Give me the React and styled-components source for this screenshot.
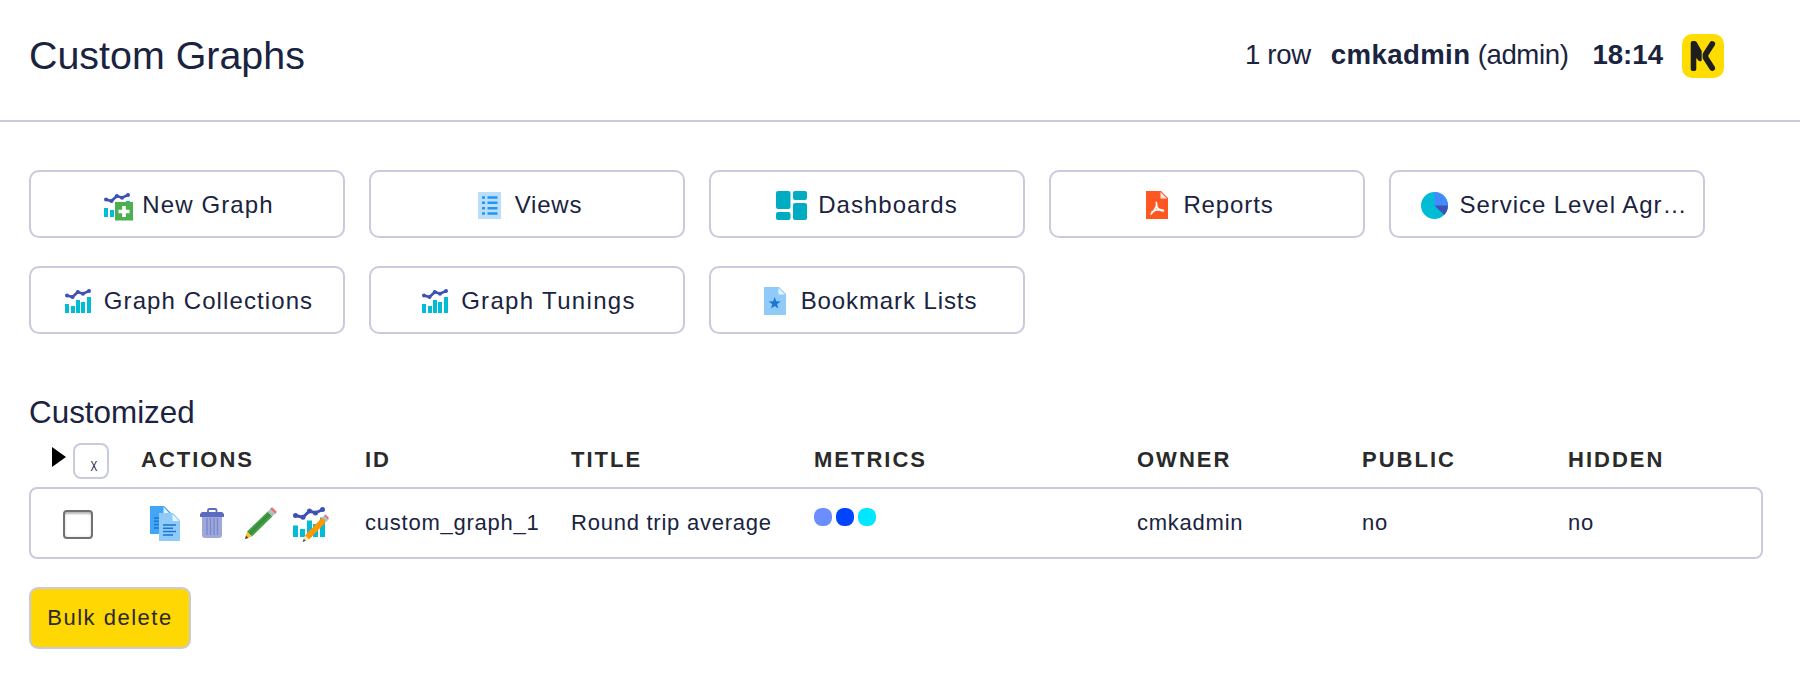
import React from "react";
import styled, { createGlobalStyle } from "styled-components";

const line = "#c9cbdc";
const ink = "#1a2340";

const GlobalStyle = createGlobalStyle`
  * { box-sizing: border-box; }
  body {
    margin: 0;
    background: #fff;
    color: ${ink};
    font-family: "Liberation Sans", Arial, sans-serif;
  }
  svg { display: block; flex: none; }
`;

const Page = styled.div`
  height: 677px;
  overflow: hidden;
`;

const Header = styled.header`
  height: 122px;
  border-bottom: 2px solid ${line};
  padding: 0 76px 8px 29px;
  display: flex;
  align-items: center;
  justify-content: space-between;
`;

const PageTitle = styled.h1`
  margin: 0;
  padding-bottom: 2px;
  font-size: 39.4px;
  font-weight: 400;
  line-height: 44px;
`;

const Status = styled.div`
  display: flex;
  align-items: center;
  font-size: 27.6px;
  line-height: 32px;
  white-space: pre;
`;

const RowCount = styled.span`
  padding-bottom: 2px;
  letter-spacing: -0.35px;
`;

const User = styled.span`
  margin: 0 24px 0 20px;
  padding-bottom: 2px;
  letter-spacing: -0.4px;

  strong {
    letter-spacing: 0.4px;
  }
`;

const Clock = styled.strong`
  margin-right: 19px;
  padding-bottom: 2px;
`;

const Nav = styled.nav`
  display: grid;
  grid-template-columns: repeat(5, 316px);
  gap: 28px 24px;
  padding: 48px 0 0 29px;
`;

const NavButton = styled.a`
  height: 68px;
  border: 2px solid ${line};
  border-radius: 10px;
  display: flex;
  align-items: center;
  justify-content: center;
`;

const NavLabel = styled.span`
  padding-top: 2px;
  font-size: 24px;
  letter-spacing: ${(p) => p.$tracking}px;
  line-height: 28px;
  white-space: nowrap;
  overflow: hidden;
  text-overflow: ellipsis;
  max-width: 232px;
`;

const IconSlot = styled.span`
  flex: none;
  padding: ${(p) => p.$drop || 2}px ${(p) => p.$after}px 0 ${(p) => p.$before}px;
`;

const SectionTitle = styled.h2`
  margin: 61px 0 0 29px;
  font-size: 31.4px;
  font-weight: 400;
  line-height: 36px;
`;

const HeadRow = styled.div`
  margin: 12px 37px 8px 29px;
  height: 36px;
  display: grid;
  grid-template-columns: 112px 224px 206px 243px 323px 225px 206px 1fr;
  align-items: center;
  color: #2a2a2a;
  font-size: 22px;
  font-weight: 700;
  letter-spacing: 2px;
  line-height: 26px;
`;

const HeadLabel = styled.span`
  padding-bottom: 2px;
`;

const HeadTools = styled.div`
  display: flex;
  align-items: center;
  padding-left: 23px;
  gap: 7px;
`;

const Arrow = styled.i`
  border-left: 14px solid #000;
  border-top: 10px solid transparent;
  border-bottom: 10px solid transparent;
  margin-bottom: 9px;
`;

const ToggleButton = styled.button`
  width: 36px;
  height: 36px;
  border: 2px solid ${line};
  border-radius: 8px;
  background: #fff;
  color: ${ink};
  padding: 9px 0 0 6px;
  font: 15px/15px "Liberation Sans", Arial, sans-serif;
`;

const ToggleMark = styled.span`
  display: inline-block;
  transform: scaleX(0.68);
`;

const DataRow = styled.div`
  margin: 0 37px 0 29px;
  height: 72px;
  border: 2px solid ${line};
  border-radius: 8px;
  display: grid;
  grid-template-columns: 110px 224px 206px 243px 323px 225px 206px 1fr;
  align-items: center;
  font-size: 22px;
  letter-spacing: 0.76px;
  line-height: 26px;
`;

const Checkbox = styled.span`
  display: block;
  width: 30px;
  height: 29px;
  margin: 3px 0 0 32px;
  border: 2px solid #6f7275;
  border-radius: 4px;
  box-shadow: inset 0 3px 2px -1px #b9b9b9, inset 0 0 3px #ddd;
`;

const Actions = styled.div`
  display: flex;
  align-items: center;
  padding-left: 9px;
`;

const ActionIcon = styled.span`
  margin-right: ${(p) => p.$gap}px;
  padding-top: ${(p) => p.$drop || 0}px;
`;

const Dots = styled.div`
  display: flex;
  gap: 4px;
  margin-bottom: 12px;
`;

const Dot = styled.i`
  width: 18px;
  height: 18px;
  border-radius: 8px;
  background: ${(p) => p.$color};
`;

const BulkButton = styled.button`
  display: block;
  margin: 28px 0 0 29px;
  width: 162px;
  height: 62px;
  padding: 0;
  border: 2px solid ${line};
  border-radius: 9px;
  background: #ffd703;
  color: #2a2a2a;
  font: 22px/26px "Liberation Sans", Arial, sans-serif;
  letter-spacing: 1.5px;
`;

const Trend = () => (
  <>
    <path d="M2 6.500 7.500 8 12.800 3 18 4.700 24 2" fill="none" stroke="#3f51b5" strokeWidth="2.600" />
    <g fill="#3f51b5">
      <circle cx="2" cy="6.5" r="2" />
      <circle cx="7.5" cy="8" r="2" />
      <circle cx="12.8" cy="3" r="2" />
      <circle cx="18" cy="4.7" r="2" />
      <circle cx="24" cy="2" r="2" />
    </g>
  </>
);

const Bars = () => (
  <path fill="#00bcd4" d="M0 15h4v9H0zM6 17h4v7H6zM11 11h4v13h-4zM16 13h4v11h-4zM22 8h4v16h-4z" />
);

const GraphIcon = () => (
  <svg width="26" height="24" viewBox="0 0 26 24">
    <Bars />
    <Trend />
  </svg>
);

const NewGraphIcon = () => (
  <svg width="29" height="28" viewBox="0 0 29 28">
    <Bars />
    <Trend />
    <path fill="#4caf50" d="M11 9h18v18.5H11z" />
    <path d="M20 13v11M14.5 18.5h11" stroke="#fff" strokeWidth="3.6" />
  </svg>
);

const ViewsIcon = () => (
  <svg width="23" height="27" viewBox="0 0 23 27">
    <path fill="#bbdefb" d="M0 0h23v27H0z" />
    <path
      d="M4 5.5h3M9.5 5.5h10M4 10.8h3M9.5 10.8h10M4 16.2h3M9.5 16.2h10M4 21.5h3M9.5 21.5h10"
      stroke="#2196f3"
      strokeWidth="2.4"
    />
  </svg>
);

const DashboardIcon = () => (
  <svg width="31" height="29" viewBox="0 0 31 29" fill="#00acc1">
    <rect width="14.5" height="18" rx="2" />
    <rect x="17" width="14" height="9" rx="2" />
    <rect y="21" width="14.5" height="8" rx="2" />
    <rect x="17" y="12" width="14" height="17" rx="2" />
  </svg>
);

const ReportIcon = () => (
  <svg width="22" height="28" viewBox="0 0 22 28">
    <path fill="#ff5722" d="M0 0h15l7 7v21H0z" />
    <path fill="#fbe9e7" d="M14.5 1v6.5H21z" />
    <path
      d="M10.3 11.5c1.200 2.500 0 6-5.200 11.500M10.800 15.500c1 2.500 3 4 6.700 4.500M6 21c3-2 7-2.700 11-2"
      fill="none"
      stroke="#fff"
      strokeWidth="1.7"
      strokeLinecap="round"
    />
  </svg>
);

const PieIcon = () => (
  <svg width="27" height="27" viewBox="0 0 27 27">
    <circle cx="13.5" cy="13.5" r="13.5" fill="#00bcd4" />
    <path fill="#448aff" d="M13.5 0a13.5 13.5 0 0 1 13.5 13.5H13.5z" />
    <path fill="#3f51b5" d="M13.5 13.5H27a13.5 13.5 0 0 1-3.8 9.4z" />
  </svg>
);

const BookmarkIcon = () => (
  <svg width="22" height="28" viewBox="0 0 22 28">
    <path fill="#90caf9" d="M0 0h15l7 7v21H0z" />
    <path fill="#e1f5fe" d="M14.5 1v6.5H21z" />
    <path
      fill="#1976d2"
      d="M10.7 10l1.5 4.3 4.500.1-3.600 2.800 1.300 4.400-3.700-2.600L7 21.600l1.300-4.400-3.600-2.800 4.500-.1z"
    />
  </svg>
);

const CopyIcon = () => (
  <svg width="30" height="35" viewBox="0 0 30 35">
    <path fill="#42a5f5" d="M0 0h14l7 7v21H0z" />
    <path fill="#e1f5fe" d="M13.5 1v7H20z" />
    <path d="M4 12h6M4 15.3h6M4 18.6h5M4 22h6" stroke="#1976d2" strokeWidth="1.5" />
    <path fill="#90caf9" d="M9 7h14l7 7.5V35H9z" />
    <path fill="#e1f5fe" d="M22.5 8v7H29z" />
    <path d="M13 19h13M13 22.3h10M13 25.6h13M13 29h10" stroke="#1976d2" strokeWidth="1.5" />
  </svg>
);

const TrashIcon = () => (
  <svg width="24" height="30" viewBox="0 0 24 30">
    <path fill="#9fa8da" d="M2 7h20v20a3 3 0 0 1-3 3H5a3 3 0 0 1-3-3z" />
    <path d="M7 10v17M10.500 10v17M14 10v17M17.500 10v17" stroke="#7986cb" strokeWidth="1.300" />
    <path d="M8 5V2.300Q8 1 9.300 1h6Q16.500 1 16.500 2.300V5" fill="none" stroke="#5c6bc0" strokeWidth="1.800" />
    <path fill="#5c6bc0" d="M2 4h20q1 0 1 1.500H24V9H0V5.500h1Q1 4 2 4z" />
  </svg>
);

const PencilIcon = () => (
  <svg width="32" height="32" viewBox="0 0 32 32">
    <path fill="#e57373" d="M27.500.5 31.500 4.500Q32 6 30 7L25 2Q26 0 27.500.5z" />
    <path fill="#b0bec5" d="M25.300 1.800 30.200 6.700 27.300 9.500 22.500 4.700z" />
    <path fill="#43a047" d="M22.500 4.700 27.300 9.500 7 29.500 2 24.500z" />
    <path d="M24.500 7 4.500 27" stroke="#388e3c" strokeWidth="2.800" />
    <path fill="#fbc02d" d="M2 24.500 7 29.500 0 32z" />
    <path fill="#37474f" d="M1 28.500 3.500 31 0 32z" />
  </svg>
);

const EditGraphIcon = () => (
  <svg width="36" height="35" viewBox="0 0 36 35">
    <path fill="#00bcd4" d="M0 18.500h5V30H0zM7 22h5v8H7zM14 13.500h5V30h-5zM20 17h5v13h-5zM27 10.500h5V30h-5z" />
    <path d="M2.500 8.500 10 10.300 16.500 4 22.500 6 29.500 2.500" fill="none" stroke="#3f51b5" strokeWidth="3" />
    <g fill="#3f51b5">
      <circle cx="2.5" cy="8.5" r="2.500" />
      <circle cx="10" cy="10.3" r="2.500" />
      <circle cx="16.5" cy="4" r="2.500" />
      <circle cx="22.5" cy="6" r="2.500" />
      <circle cx="29.5" cy="2.500" r="2.500" />
    </g>
    <path fill="#e57373" d="M32.500 7.500 35.500 10.500Q36 12 35 13L31 9Q31.500 7.500 32.500 7.500z" />
    <path fill="#b0bec5" d="M31 8.700 35.200 12.900 33 15 28.800 10.800z" />
    <path fill="#ff9800" d="M28.800 10.800 33 15 16 32.500 12 28.500z" />
    <path fill="#ffe0b2" d="M12 28.500 16 32.500 9.500 35z" />
    <path fill="#455a64" d="M10.800 31.800 12.800 33.800 9.500 35z" />
  </svg>
);

const Logo = () => (
  <svg width="42" height="44" viewBox="0 0 42 44">
    <rect width="42" height="44" rx="10" fill="#ffdd00" />
    <path
      fill="#1e1e1e"
      d="M8.700 9q0-2 2-2h2q1.500 0 2.200 1.500L19.700 17V26q0 1-1 1.200-2 .2-2.500-1L14.300 24V35q0 2-2 2h-1.600q-2 0-2-2z"
    />
    <path
      d="M30.200 10 23.500 20.500V23.500L30.200 34"
      fill="none"
      stroke="#1e1e1e"
      strokeWidth="5.8"
      strokeLinecap="round"
      strokeLinejoin="round"
    />
  </svg>
);

const links = [
  { label: "New Graph", Icon: NewGraphIcon, before: 4, after: 9, drop: 6, tracking: 1.12 },
  { label: "Views", Icon: ViewsIcon, before: 6, after: 14, tracking: 0.8 },
  { label: "Dashboards", Icon: DashboardIcon, before: 0, after: 11, drop: 3, tracking: 1 },
  { label: "Reports", Icon: ReportIcon, before: 6, after: 15, tracking: 0.87 },
  { label: "Service Level Agreements", Icon: PieIcon, before: 18, after: 12, tracking: 0.95 },
  { label: "Graph Collections", Icon: GraphIcon, before: 4, after: 13, tracking: 1.1 },
  { label: "Graph Tunings", Icon: GraphIcon, before: 4, after: 13, tracking: 1.33 },
  { label: "Bookmark Lists", Icon: BookmarkIcon, before: 7, after: 15, tracking: 0.9 },
];

const headings = ["ACTIONS", "ID", "TITLE", "METRICS", "OWNER", "PUBLIC", "HIDDEN"];

export default function App() {
  return (
    <Page>
      <GlobalStyle />
      <Header>
        <PageTitle>Custom Graphs</PageTitle>
        <Status>
          <RowCount>1 row</RowCount>
          <User>
            <strong>cmkadmin</strong> (admin)
          </User>
          <Clock>18:14</Clock>
          <Logo />
        </Status>
      </Header>
      <Nav>
        {links.map(({ label, Icon, before, after, drop, tracking }) => (
          <NavButton key={label}>
            <IconSlot $before={before} $after={after} $drop={drop}>
              <Icon />
            </IconSlot>
            <NavLabel $tracking={tracking}>{label}</NavLabel>
          </NavButton>
        ))}
      </Nav>
      <SectionTitle>Customized</SectionTitle>
      <HeadRow>
        <HeadTools>
          <Arrow />
          <ToggleButton>
            <ToggleMark>X</ToggleMark>
          </ToggleButton>
        </HeadTools>
        {headings.map((text) => (
          <HeadLabel key={text}>{text}</HeadLabel>
        ))}
      </HeadRow>
      <DataRow>
        <Checkbox />
        <Actions>
          <ActionIcon $gap={20}><CopyIcon /></ActionIcon>
          <ActionIcon $gap={21}><TrashIcon /></ActionIcon>
          <ActionIcon $gap={16}><PencilIcon /></ActionIcon>
          <ActionIcon $gap={0} $drop={3}><EditGraphIcon /></ActionIcon>
        </Actions>
        <span>custom_graph_1</span>
        <span>Round trip average</span>
        <Dots>
          <Dot $color="#6b8eff" />
          <Dot $color="#0044ff" />
          <Dot $color="#00e8ff" />
        </Dots>
        <span>cmkadmin</span>
        <span>no</span>
        <span>no</span>
      </DataRow>
      <BulkButton>Bulk delete</BulkButton>
    </Page>
  );
}
